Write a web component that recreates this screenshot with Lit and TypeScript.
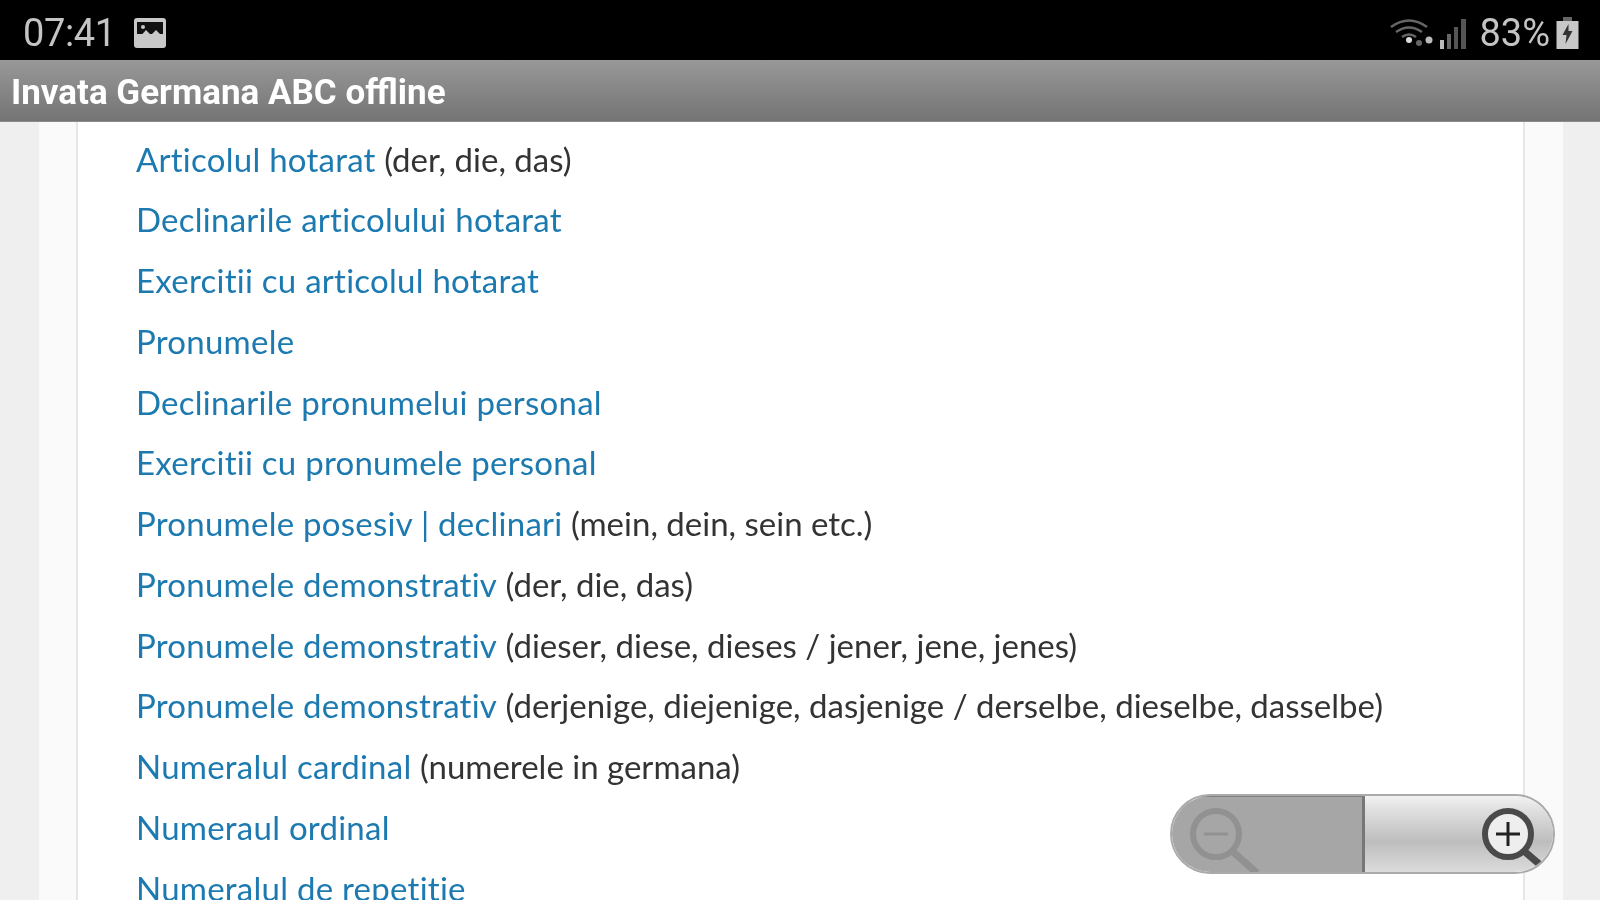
import { LitElement, html, css } from "lit";
import { customElement } from "lit/decorators.js";

const rows: [string, string][] = [
  ["Articolul hotarat", "(der, die, das)"],
  ["Declinarile articolului hotarat", ""],
  ["Exercitii cu articolul hotarat", ""],
  ["Pronumele", ""],
  ["Declinarile pronumelui personal", ""],
  ["Exercitii cu pronumele personal", ""],
  ["Pronumele posesiv | declinari", "(mein, dein, sein etc.)"],
  ["Pronumele demonstrativ", "(der, die, das)"],
  ["Pronumele demonstrativ", "(dieser, diese, dieses / jener, jene, jenes)"],
  ["Pronumele demonstrativ", "(derjenige, diejenige, dasjenige / derselbe, dieselbe, dasselbe)"],
  ["Numeralul cardinal", "(numerele in germana)"],
  ["Numeraul ordinal", ""],
  ["Numeralul de repetitie", ""],
];

@customElement("app-root")
export class AppRoot extends LitElement {
  static styles = css`
    :host { display: block; width: 1600px; height: 900px; overflow: hidden; position: relative; background: #efefef; font-family: Lato, sans-serif; }
    .page { filter: blur(0.7px); height: 900px; }
    .status { height: 60px; background: #000; color: #c4c4c4; display: flex; align-items: center; padding: 5px 21px 0 23px; box-sizing: border-box; font-family: Roboto, sans-serif; font-size: 38px; }
    .status .time { letter-spacing: -0.4px; }
    .status .pic { margin-left: 18px; }
    .status .right { margin-left: auto; display: flex; align-items: center; }
    .status .pct { margin: 0 6px 0 11px; }
    svg { display: block; }
    .title { height: 62px; box-sizing: border-box; background: linear-gradient(#989898, #747474); border-bottom: 1px solid #8a8a8a; color: #fff; font: bold 35px Roboto, sans-serif; display: flex; align-items: center; padding: 4px 0 0 11px; }
    .outer { margin: 0 37px 0 39px; background: #fafafa; padding: 0 38px 0 37px; height: 778px; overflow: hidden; }
    .inner { background: #fff; border: solid #e6e6e6; border-width: 0 2px; height: 100%; box-sizing: border-box; padding: 6.5px 0 0 58px; }
    .row { height: 60.75px; line-height: 60.75px; font-size: 33px; white-space: nowrap; color: #333; font-variant-ligatures: none; }
    .row a { color: #1c7ab0; letter-spacing: 0.25px; }
    .zoom { position: absolute; left: 1170px; top: 794px; width: 385px; height: 80px; box-sizing: border-box; border-radius: 40px; overflow: hidden; display: flex; border: 2px solid #aaa; }
    .zoom .off { width: 190px; background: #a6a6a6; border-right: 3px solid #777; border-top: 1px solid #808080; }
    .zoom .on { flex: 1; background: linear-gradient(#f2f2f2, #dedede 20%, #bdbdbd 60%, #dcdcdc); }
    .icon { position: absolute; top: 11px; }
    .icon.minus { left: 17px; }
    .icon.plus { left: 309px; }
  `;
  render() {
    return html`
      <div class="page">
      <div class="status">
        <span class="time">07:41</span>
        <svg class="pic" width="32" height="30" viewBox="0 0 32 30"><rect width="32" height="30" rx="3" fill="#c8c8c8"/><rect x="3" y="4" width="26" height="12" fill="#111"/><path d="M3 22 L12 12 L17 17 L22 12 L29 19 V26 H3Z" fill="#c8c8c8"/><circle cx="9" cy="9" r="2" fill="#c8c8c8"/></svg>
        <div class="right">
          <svg width="78" height="32" viewBox="0 0 78 32" fill="none" stroke="#666"><path d="M1 10 Q19 -3 37 10" stroke-width="2.5"/><path d="M6 15 Q19 6 32 15" stroke-width="2.5"/><path d="M12 20 Q19 15 26 20" stroke-width="2.5"/><circle cx="19" cy="23" r="3" fill="#ddd" stroke="none"/><circle cx="29" cy="26" r="3" fill="#666" stroke="none"/><circle cx="39" cy="23" r="3.5" fill="#bbb" stroke="none"/><rect x="50" y="23" width="4" height="9" fill="#bbb" stroke="none"/><rect x="57" y="17" width="4" height="15" fill="#666" stroke="none"/><rect x="64" y="10" width="4" height="22" fill="#555" stroke="none"/><rect x="71" y="2" width="5" height="30" fill="#555" stroke="none"/></svg>
          <span class="pct">83%</span>
          <svg width="23" height="32" viewBox="0 0 22 32"><path d="M7 0 H15 V4 H22 V32 H0 V4 H7Z" fill="#c8c8c8"/><path d="M7 0 H15 V4 H7Z" fill="#666"/><path d="M12 7 L6 18 H10 L9 27 L16 14 H12Z" fill="#333"/></svg>
        </div>
      </div>
      <div class="title">Invata Germana ABC offline</div>
      <div class="outer"><div class="inner">
        ${rows.map(([a, b]) => html`<div class="row"><a>${a}</a>${b ? " " + b : ""}</div>`)}
      </div></div>
      <div class="zoom">
        <div class="off"></div><div class="on"></div>
        <svg class="icon minus" width="72" height="68" viewBox="0 0 72 68" fill="none" stroke="#919191"><circle cx="27" cy="27" r="23" stroke-width="6"/><path d="M15 27 H39" stroke-width="3"/><path d="M43 44 L68 66" stroke-width="7"/></svg>
        <svg class="icon plus" width="72" height="68" viewBox="0 0 72 68" fill="none" stroke="#4a4a4a"><circle cx="27" cy="27" r="23" fill="#eee" stroke-width="6"/><path d="M15 27 H39 M27 15 V39" stroke-width="3" stroke="#222"/><path d="M43 44 L64 62" stroke-width="7"/></svg>
      </div>
      </div>
    `;
  }
}
